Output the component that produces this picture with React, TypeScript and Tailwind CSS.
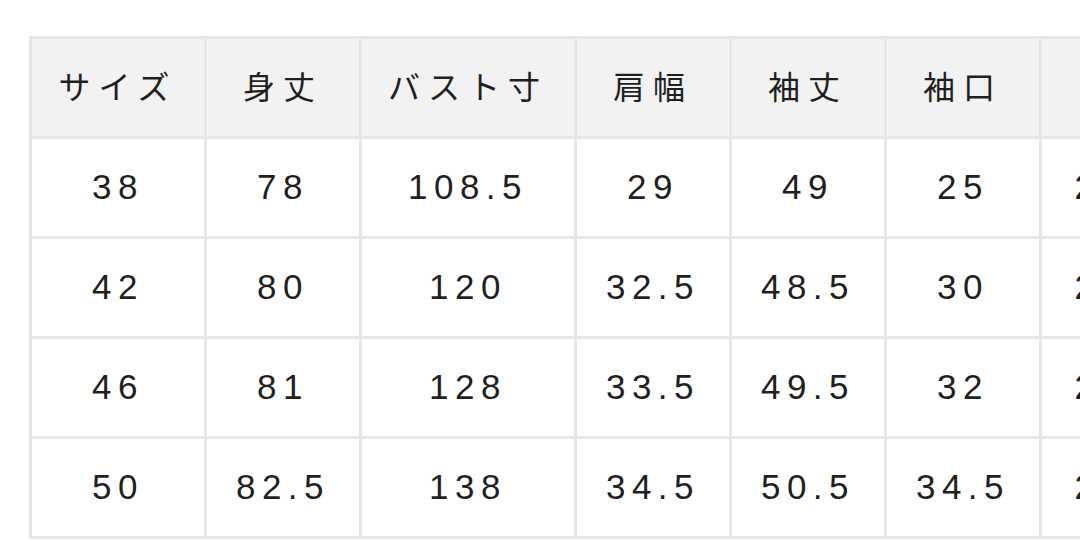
import React from 'react'

const headers = ['サイズ', '身丈', 'バスト寸', '肩幅', '袖丈', '袖口', '着丈']

const rows = [
  ['38', '78', '108.5', '29', '49', '25', '24.5'],
  ['42', '80', '120', '32.5', '48.5', '30', '26.5'],
  ['46', '81', '128', '33.5', '49.5', '32', '27.5'],
  ['50', '82.5', '138', '34.5', '50.5', '34.5', '28.5'],
]

const widths = ['w-[175px]', 'w-[155px]', 'w-[215px]', 'w-[155px]', 'w-[155px]', 'w-[155px]', 'w-[162px]']

export default function App() {
  return (
    <div className="w-[1080px] h-[541px] overflow-hidden bg-white pl-[29px] pt-[36px]">
      <table
        className="table-fixed border-collapse w-[1172px] text-[#1f1f1f]"
        style={{ fontFamily: '"Liberation Sans", "Noto Sans CJK JP", sans-serif' }}
      >
        <colgroup>
          {widths.map((w, i) => (
            <col key={i} className={w} />
          ))}
        </colgroup>
        <thead>
          <tr className="h-[100px] bg-[#f2f2f2]">
            {headers.map(h => (
              <th
                key={h}
                className="border-[3px] border-[#e6e6e6] text-center font-normal text-[32px] tracking-[8px]"
              >
                {h}
              </th>
            ))}
          </tr>
        </thead>
        <tbody>
          {rows.map((row, r) => (
            <tr key={r} className="h-[100px]">
              {row.map((v, c) => (
                <td
                  key={c}
                  className="border-[3px] border-[#e6e6e6] text-center text-[35px] tracking-[6.5px]"
                >
                  {v}
                </td>
              ))}
            </tr>
          ))}
        </tbody>
      </table>
    </div>
  )
}
